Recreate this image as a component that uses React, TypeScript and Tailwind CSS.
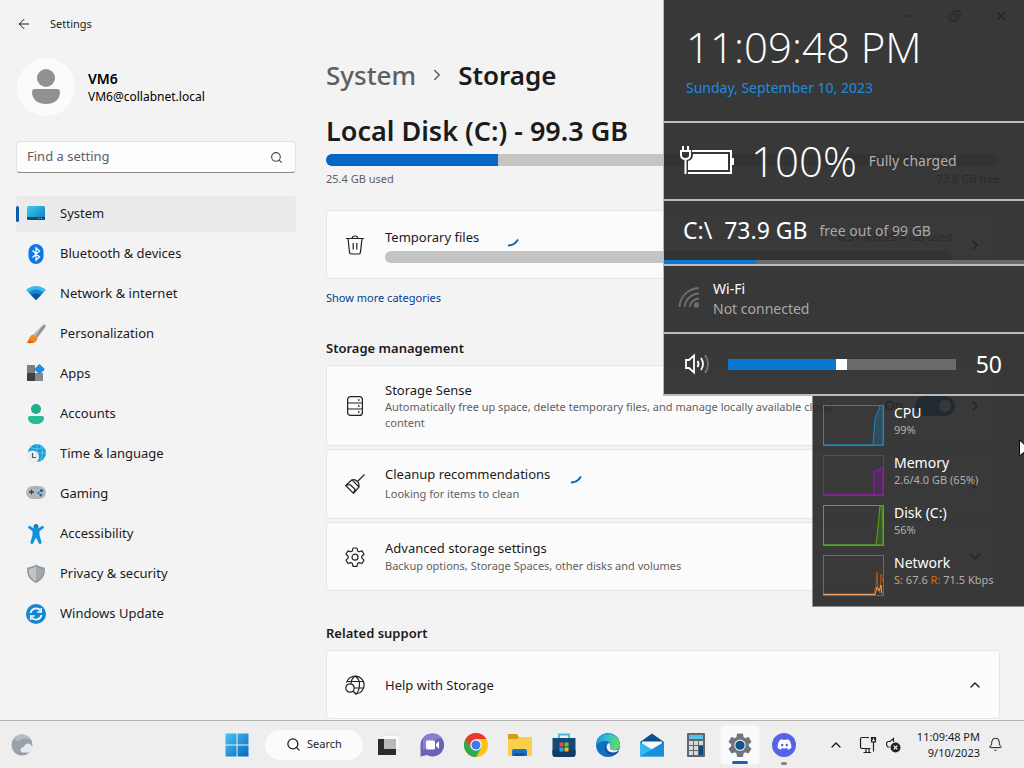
import type { ReactNode } from 'react'
import { ArrowLeft, Bell, ChevronDown, ChevronRight, ChevronUp, Copy, Minus, Search, X } from 'lucide-react'
import { FaDiscord } from 'react-icons/fa'

const GEAR =
  'M8 1h4l.6 2.900 1.600.9 2.800-.9 2 3.400-2.200 2v1.800l2.200 2-2 3.400-2.800-.9-1.600.9L12 19.400H8l-.6-2.900-1.600-.9-2.800.9-2-3.400 2.200-2V9.300L1 7.300l2-3.400 2.800.9 1.600-.9z'

/* ---------- sidebar icons ---------- */

function SystemIcon() {
  return (
    <svg width="20" height="20" viewBox="0 0 20 20">
      <defs>
        <linearGradient id="sys" x1="0" y1="0" x2="1" y2="1">
          <stop offset="0" stopColor="#37d0ef" />
          <stop offset="1" stopColor="#1278b8" />
        </linearGradient>
      </defs>
      <rect x="1" y="2" width="18" height="14" rx="1.500" fill="url(#sys)" />
      <path d="M1 13h18v1.500a1.500 1.500 0 0 1-1.500 1.500h-15A1.500 1.500 0 0 1 1 14.500z" fill="#0b4f80" />
      <path d="M12.500 14.500h1M15 14.500h1" stroke="#7fd3f5" />
    </svg>
  )
}

function BluetoothIcon() {
  return (
    <svg width="20" height="20" viewBox="0 0 20 20">
      <rect x="2.500" width="15" height="20" rx="7.500" fill="#0a78e6" />
      <path d="M6.500 6.500l7 6.500L10 16V4l3.500 3-7 6.500" fill="none" stroke="#fff" strokeWidth="1.300" />
    </svg>
  )
}

function NetworkIcon() {
  return (
    <svg width="20" height="20" viewBox="0 0 20 20">
      <path d="M0 6Q10-2 20 6L10 16z" fill="#3bb9ea" />
      <path d="M2.600 8.500Q10 2.500 17.400 8.500L10 16z" fill="#1b84d2" />
      <path d="M5.300 11.200Q10 7.500 14.700 11.200L10 16z" fill="#0d559c" />
    </svg>
  )
}

function BrushIcon() {
  return (
    <svg width="20" height="20" viewBox="0 0 20 20">
      <path d="M18.500.5c1.500 0 1.200 1.500.6 2.700L11.500 13.500 7.500 10.500 16.300 1.700z" fill="#8d9299" />
      <path d="M17 1.500L7.800 10.700l1.700 1.200z" fill="#bdc1c6" />
      <path d="M7.500 10.500l4 3c.3 5-5.500 6.500-11 5.300 2.800-1.500 1.800-7.300 7-8.300z" fill="#f08a24" />
      <path d="M.5 18.800c3.500.8 7 .3 9-1.300-3 .5-5-.5-6-2-.8 1.500-1.300 2.700-3 3.300z" fill="#d9661c" />
    </svg>
  )
}

function AppsIcon() {
  return (
    <svg width="20" height="20" viewBox="0 0 20 20">
      <path d="M1 1h8v8H1z" fill="#7b7f83" />
      <path d="M1 9h8v8H1z" fill="#3d4145" />
      <path d="M9 9h8v8H9z" fill="#85898d" />
      <path d="M13.500 0L19 5.200 13.500 10.500 8 5.200z" fill="#1f8fe0" />
    </svg>
  )
}

function AccountsIcon() {
  return (
    <svg width="20" height="20" viewBox="0 0 20 20">
      <circle cx="10" cy="5" r="5" fill="#20ae8c" />
      <path d="M2 14.200A2 2 0 0 1 4 12h12a2 2 0 0 1 2 2.200C17.700 18 14.500 20 10 20s-7.700-2-8-5.800z" fill="#27bd97" />
    </svg>
  )
}

function TimeIcon() {
  return (
    <svg width="20" height="20" viewBox="0 0 20 20">
      <circle cx="11" cy="9" r="9" fill="#1d9bd8" />
      <path d="M11 0v18M2 9h18M4 3.500q7 3 14 0M14.500.800q4 8 0 16.500" fill="none" stroke="#63d0f2" strokeWidth=".8" />
      <circle cx="6.500" cy="13" r="6.500" fill="#eceef0" />
      <path d="M6.500 9v4.500H10" fill="none" stroke="#4b5563" strokeWidth="1.200" />
    </svg>
  )
}

function GamingIcon() {
  return (
    <svg width="20" height="20" viewBox="0 0 20 20">
      <rect y="2" width="20" height="13" rx="6.500" fill="#b3b8bd" />
      <path d="M5.500 5.500v5M3 8h5" stroke="#3d4449" strokeWidth="1.300" />
      <path d="M8.500 4h.8M11 4h.8" stroke="#5d6368" />
      <circle cx="15.500" cy="6.500" r="1.600" fill="#14649b" />
      <circle cx="12.500" cy="8.800" r="1.400" fill="#3389bd" />
      <circle cx="14.800" cy="11" r="1.500" fill="#1878b5" />
    </svg>
  )
}

function AccessibilityIcon() {
  return (
    <svg width="20" height="20" viewBox="0 0 20 20">
      <circle cx="10" cy="2.500" r="2.500" fill="#137fc9" />
      <path
        d="M2.300 2.500c.6-.9 1.400-.8 2.200-.2C8 5.500 12 5.500 15.500 2.300c.8-.6 1.600-.7 2.200.2.500.9.100 1.500-.6 2.100L13.500 7.300v4l2 6.700c.3 1-.2 1.600-.9 1.900-.9.300-1.600-.1-2-.9L10 13.500 7.400 19c-.4.800-1.100 1.200-2 .9-.7-.3-1.200-.9-.9-1.900l2-6.700v-4L2.900 4.600c-.7-.6-1.100-1.200-.6-2.100z"
        fill="#1590dc"
      />
    </svg>
  )
}

function ShieldIcon() {
  return (
    <svg width="20" height="20" viewBox="0 0 20 20">
      <path d="M10 .5c2.500 1.800 5.500 2.800 8.800 3C19.500 11 16.500 16 10 19 3.500 16 .5 11 1.200 3.500 4.500 3.300 7.500 2.300 10 .5z" fill="#8f9499" />
      <path d="M10 2.300v15C4.800 14.500 2.500 11 2.600 5 5.300 4.700 8 3.800 10 2.300z" fill="#c0c4c7" />
      <path d="M10 2.300v15c5.200-2.800 7.500-6.300 7.400-12.300-2.700-.3-5.400-1.200-7.400-2.700z" fill="#a3a8ac" />
    </svg>
  )
}

function UpdateIcon() {
  return (
    <svg width="20" height="20" viewBox="0 0 20 20">
      <circle cx="10" cy="10" r="10" fill="#1486d4" />
      <path d="M4.500 9A5.700 5.700 0 0 1 14.500 6.500M15.500 11A5.700 5.700 0 0 1 5.500 13.500" fill="none" stroke="#fff" strokeWidth="1.700" />
      <path d="M15.300 4v4h-4M4.700 16v-4h4" fill="none" stroke="#fff" strokeWidth="1.500" />
    </svg>
  )
}

const navItems: { label: string; icon: ReactNode }[] = [
  { label: 'System', icon: <SystemIcon /> },
  { label: 'Bluetooth & devices', icon: <BluetoothIcon /> },
  { label: 'Network & internet', icon: <NetworkIcon /> },
  { label: 'Personalization', icon: <BrushIcon /> },
  { label: 'Apps', icon: <AppsIcon /> },
  { label: 'Accounts', icon: <AccountsIcon /> },
  { label: 'Time & language', icon: <TimeIcon /> },
  { label: 'Gaming', icon: <GamingIcon /> },
  { label: 'Accessibility', icon: <AccessibilityIcon /> },
  { label: 'Privacy & security', icon: <ShieldIcon /> },
  { label: 'Windows Update', icon: <UpdateIcon /> },
]

/* ---------- content icons ---------- */

function TrashIcon() {
  return (
    <svg width="20" height="20" viewBox="0 0 20 20" fill="none" stroke="#222" strokeWidth="1.200">
      <path d="M1 3.500h18M7.200 3.500a2.800 2.500 0 0 1 5.600 0M3 3.500l1.500 13.600A2 2 0 0 0 6.500 19h7a2 2 0 0 0 2-1.900L17 3.500M8.200 8v6.500M11.800 8v6.500" />
    </svg>
  )
}

function DrivesIcon() {
  return (
    <svg width="20" height="20" viewBox="0 0 20 20" fill="none" stroke="#222" strokeWidth="1.200">
      <rect x="2.600" y=".6" width="14.800" height="18.800" rx="3" />
      <path d="M2.600 6.500q0 .5 2 .5h10.800q2 0 2-.5M2.600 12.500q0 .5 2 .5h10.800q2 0 2-.5" />
      <path d="M13 4h1.500M13 10h1.500M13 16h1.500" strokeWidth="1.600" />
    </svg>
  )
}

function BroomIcon() {
  return (
    <svg width="20" height="20" viewBox="0 0 20 20" fill="none" stroke="#222" strokeWidth="1.200" strokeLinejoin="round">
      <path d="M19.500.5l-7 7M7 5.800q3.500-.5 5.500 1.700t1.500 5.500L8.500 19.300.7 11.500zM7 5.800l7 7.200M.7 11.500l4.300-1M8.500 19.300l1.500-4-5-4.800" />
    </svg>
  )
}

function GearIcon() {
  return (
    <svg width="20" height="20" viewBox="0 0 20 20" fill="none" stroke="#222" strokeWidth="1.200" strokeLinejoin="round">
      <path d={GEAR} />
      <circle cx="10" cy="10.200" r="3" />
    </svg>
  )
}

function GlobeSearchIcon() {
  return (
    <svg width="20" height="20" viewBox="0 0 20 20" fill="none" stroke="#222" strokeWidth="1.200">
      <path d="M1.500 7.500A9 9 0 1 1 11.500 19M2 6.500h17M9 13h10M6 8.500Q6.500 3 10.300 1 15 5 14.500 10q0 5-3 9" />
      <circle cx="5" cy="13" r="4.200" />
      <path d="M8 16l3.500 3.500" strokeWidth="1.500" />
    </svg>
  )
}

function Spinner() {
  return (
    <svg width="20" height="20" viewBox="0 0 20 20" fill="none" aria-label="Loading">
      <path d="M7 18.500Q13.500 18.500 17 12.500" stroke="#0f63a5" strokeWidth="1.800" />
    </svg>
  )
}

function Card({ icon, height, children, side }: { icon: ReactNode; height: string; children: ReactNode; side?: ReactNode }) {
  return (
    <div className={`flex items-center rounded-sm border border-[#e5e5e5] bg-[#fbfbfb] pr-4 pl-[18px] ${height}`}>
      <div className="w-10 shrink-0">{icon}</div>
      <div className="min-w-0 flex-1">{children}</div>
      <div className="flex shrink-0 items-center">{side}</div>
    </div>
  )
}

function Sidebar() {
  return (
    <aside className="flex w-[296px] shrink-0 flex-col pl-4">
      <div className="mt-2 flex items-center gap-3">
        <svg className="size-[60px]" viewBox="0 0 60 60">
          <circle cx="30" cy="31" r="29" fill="#fbfbfb" />
          <circle cx="30" cy="22" r="9" fill="#919191" />
          <path d="M16 36q0-3 3-3h22q3 0 3 3c0 8-6 12-14 12s-14-4-14-12z" fill="#919191" />
        </svg>
        <div className="pt-1">
          <div className="text-sm leading-[18px] font-semibold text-black">VM6</div>
          <div className="text-xs leading-[18px] text-black">VM6@collabnet.local</div>
        </div>
      </div>
      <label className="mt-[25px] flex h-8 items-center rounded-sm border border-[#e3e3e3] border-b-[#868686] bg-[#fdfdfd] pr-3 pl-[10px]">
        <input
          type="text"
          placeholder="Find a setting"
          aria-label="Find a setting"
          className="min-w-0 flex-1 bg-transparent text-[13px] outline-none placeholder:text-[#606060]"
        />
        <Search size={13} strokeWidth={2} className="text-[#444]" />
      </label>
      <nav className="mt-[23px] flex flex-col gap-1">
        {navItems.map(({ label, icon }, i) => (
          <a
            key={label}
            href="#"
            className={`relative flex h-9 items-center gap-[14px] rounded-sm pl-[10px] text-[13px] text-[#1b1b1b] ${i === 0 ? 'bg-[#eaeaea]' : ''}`}
          >
            {i === 0 && <span className="absolute left-0 h-4 w-[3px] rounded-full bg-[#0f5ca8]" />}
            {icon}
            {label}
          </a>
        ))}
      </nav>
    </aside>
  )
}

function Content() {
  return (
    <main className="min-w-0 flex-1 overflow-hidden pr-6 pl-[30px] text-[#1b1b1b]">
      <h1 className="mt-[7px] flex h-10 items-center text-[26px] leading-10 font-semibold">
        <a href="#" className="font-medium text-[#5f5f5f]">System</a>
        <ChevronRight size={18} className="mx-3 text-[#5f5f5f]" />
        Storage
      </h1>
      <h2 className="mt-4 text-[27px] leading-10 font-semibold">Local Disk (C:) - 99.3 GB</h2>
      <div className="mt-[3px] flex h-3 overflow-hidden rounded-full bg-[#c4c4c4]">
        <div className="w-[172px] bg-[#0566c8]" />
      </div>
      <div className="mt-1 flex justify-between text-[11px] leading-[18px] text-[#5f5f5f]">
        <span>25.4 GB used</span>
        <span>73.8 GB free</span>
      </div>

      <div className="mt-[22px]">
        <Card icon={<TrashIcon />} height="h-[69px]" side={<ChevronRight size={16} className="ml-[15px]" />}>
          <div className="flex items-center justify-between text-[13px] leading-5">
            <div className="flex items-center gap-[22px]">
              Temporary files
              <Spinner />
            </div>
            <span className="text-[11px] text-[#5f5f5f]">6.31 MB/25.4 GB used</span>
          </div>
          <div className="mt-1 h-3 rounded-full bg-[#c4c4c4]" />
        </Card>
      </div>
      <a href="#" className="mt-[10px] block text-[11px] leading-[18px] text-[#003e92]">Show more categories</a>

      <h3 className="mt-8 text-[13px] leading-[18px] font-semibold">Storage management</h3>
      <div className="mt-2 flex flex-col gap-[3px]">
        <Card
          icon={<DrivesIcon />}
          height="h-[81px]"
          side={
            <>
              <label htmlFor="sense" className="mr-3 text-[13px]">On</label>
              <span className="relative mr-3 flex h-5 w-10">
                <input id="sense" type="checkbox" defaultChecked className="h-5 w-10 appearance-none rounded-full bg-[#0067c0]" />
                <span className="pointer-events-none absolute top-1 right-1 size-3 rounded-full bg-white" />
              </span>
              <ChevronRight size={16} />
            </>
          }
        >
          <div className="text-[13px] leading-[18px]">Storage Sense</div>
          <div className="max-w-[480px] text-[11px] leading-4 text-[#5f5f5f]">
            Automatically free up space, delete temporary files, and manage locally available cloud content
          </div>
        </Card>
        <Card icon={<BroomIcon />} height="h-[70px]" side={<ChevronRight size={16} />}>
          <div className="flex items-center gap-[14px] text-[13px] leading-5">
            Cleanup recommendations
            <Spinner />
          </div>
          <div className="text-[11px] leading-5 text-[#5f5f5f]">Looking for items to clean</div>
        </Card>
        <Card icon={<GearIcon />} height="h-[69px]" side={<ChevronDown size={16} />}>
          <div className="text-[13px] leading-[18px]">Advanced storage settings</div>
          <div className="text-[11px] leading-[18px] text-[#5f5f5f]">Backup options, Storage Spaces, other disks and volumes</div>
        </Card>
      </div>

      <h3 className="mt-[33px] text-[13px] leading-[18px] font-semibold">Related support</h3>
      <div className="mt-2">
        <Card icon={<GlobeSearchIcon />} height="h-[69px]" side={<ChevronUp size={16} />}>
          <div className="text-[13px] leading-5">Help with Storage</div>
        </Card>
        <div className="h-10 border-x border-[#e5e5e5] bg-[#fbfbfb]" />
      </div>
    </main>
  )
}

/* ---------- status overlay ---------- */

const meters = [
  { name: 'CPU', value: '99%', color: '#1c86c0', line: 'M0 40H50L52 14 56 4 57 0 60 1V40z', fill: 'rgba(28,134,192,.25)' },
  { name: 'Memory', value: '2.6/4.0 GB (65%)', color: '#9616b2', line: 'M0 40H51V16L57 15V13H60V40z', fill: 'rgba(140,19,166,.25)' },
  { name: 'Disk (C:)', value: '56%', color: '#55a81a', line: 'M0 40H53L55 22 57 1 59 1 60 26V40z', fill: 'rgba(79,158,23,.25)' },
]

function Overlay() {
  return (
    <div className="absolute top-0 right-0 flex w-[361px] flex-col items-end text-white">
      <section className="flex w-full flex-col border-l border-[#b9b9b9]">
        <div className="h-[121px] bg-[#232323]/90 pt-5 pl-[22px]">
          <div className="font-['Open_Sans',sans-serif] text-[42px] leading-[54px] font-light">11:09:48 PM</div>
          <div className="mt-1 text-sm leading-5 text-[#1b8ce0]">Sunday, September 10, 2023</div>
        </div>
        <div className="h-[2px] bg-[#bbb]" />
        <div className="flex h-[76px] items-center bg-[#232323]/90 pl-4">
          <svg width="55" height="30" viewBox="0 0 55 30">
            <path d="M12 5h39v22H8" fill="none" stroke="#fff" strokeWidth="2" />
            <path d="M13 8h35v16H8V15q5-1 5-7z" fill="#fff" />
            <path d="M52 12h2v7h-2z" fill="#fff" />
            <path d="M3 0v5M8 0v5M1 5h9v4q0 4-4.500 4T1 9zM5.500 13v15" fill="none" stroke="#fff" strokeWidth="2" />
          </svg>
          <div className="ml-4 font-['Open_Sans',sans-serif] text-[42px] leading-[54px] font-light">100%</div>
          <div className="ml-3 text-sm text-[#b0b0b0]">Fully charged</div>
        </div>
        <div className="h-[2px] bg-[#bbb]" />
        <div className="flex h-[59px] items-center bg-[#232323]/90 pl-[19px]">
          <div className="text-[23px] whitespace-pre">C:\  73.9 GB</div>
          <div className="ml-3 text-sm text-[#a9a9a9]">free out of 99 GB</div>
        </div>
        <div className="flex h-1 bg-[#6b6b6b]">
          <div className="w-[92px] bg-[#0878d2]" />
        </div>
        <div className="h-[2px] bg-[#bbb]" />
        <div className="flex h-[66px] items-center bg-[#232323]/90 pl-[14px]">
          <svg width="24" height="24" viewBox="0 0 24 24" fill="none" stroke="#6e6e6e" strokeWidth="1.800">
            <path d="M1.500 20A20 20 0 0 1 21 1M6.500 20A15 15 0 0 1 21 6.500M11.500 20A10 10 0 0 1 21 11.500" />
            <circle cx="18.500" cy="18" r="1.800" fill="#6e6e6e" />
          </svg>
          <div className="ml-[11px] text-sm leading-5">
            <div>Wi-Fi</div>
            <div className="text-[#a9a9a9]">Not connected</div>
          </div>
        </div>
        <div className="h-[2px] bg-[#bbb]" />
        <div className="flex h-[60px] items-center bg-[#232323]/90 pr-[22px] pl-5">
          <svg width="28" height="24" viewBox="0 0 28 24" fill="none" stroke="#fff" strokeWidth="1.800">
            <path d="M2 8h3l5-4.500v17L5 16H2z" />
            <path d="M13.500 9q2 3 0 6M17 6q4 6 0 12" />
            <path d="M21 3q6 9 0 18" stroke="#777" />
          </svg>
          <div className="relative ml-4 flex h-[11px] flex-1 bg-[#6b6b6b]">
            <div className="w-1/2 bg-[#0878d2]" />
            <input
              type="range"
              min={0}
              max={100}
              defaultValue={50}
              aria-label="Volume"
              className="absolute inset-0 h-full w-full appearance-none bg-transparent [&::-webkit-slider-thumb]:h-[11px] [&::-webkit-slider-thumb]:w-[11px] [&::-webkit-slider-thumb]:appearance-none [&::-webkit-slider-thumb]:bg-white"
            />
          </div>
          <div className="ml-5 text-[23px]">50</div>
        </div>
        <div className="h-[2px] bg-[#bbb]" />
      </section>

      <section className="h-[211px] w-[212px] border-b border-l border-[#8f8f8f] bg-[#232323]/90 pt-2 pl-[10px]">
        {meters.map((m) => (
          <div key={m.name} className="flex h-[50px] gap-[10px]">
            <svg className="mt-px shrink-0" width="61" height="41" viewBox="0 0 61 41" fill="none" stroke={m.color}>
              <path d="M.5.5h60v40H.5z" shapeRendering="crispEdges" />
              <path d={m.line} fill={m.fill} />
            </svg>
            <MeterText name={m.name}>{m.value}</MeterText>
          </div>
        ))}
        <div className="flex h-[50px] gap-[10px]">
          <svg className="mt-px shrink-0" width="61" height="41" viewBox="0 0 61 41" fill="none" stroke="#b4570f">
            <path d="M.5.5h60v40H.5z" shapeRendering="crispEdges" />
            <path d="M0 39H51L53 30 54 17 55 36 57 38 58 19 60 28" />
            <path d="M0 39.500H52L54 32 56 36 58 30 59 39" stroke="#eba064" />
          </svg>
          <MeterText name="Network">
            <span className="text-[#d89a62]">S:</span> 67.6 <span className="text-[#d0701c]">R:</span> 71.5 Kbps
          </MeterText>
        </div>
      </section>
    </div>
  )
}

function MeterText({ name, children }: { name: string; children: ReactNode }) {
  return (
    <div className="whitespace-nowrap">
      <div className="text-sm leading-[18px]">{name}</div>
      <div className="text-[11px] leading-4 text-[#b0b0b0]">{children}</div>
    </div>
  )
}

/* ---------- taskbar ---------- */

function TaskButton({ label, active, children }: { label: string; active?: boolean; children: ReactNode }) {
  return (
    <button
      aria-label={label}
      className={`relative flex size-10 items-center justify-center rounded ${active ? 'border border-[#f3f3f3] bg-[#fafafa]' : ''}`}
    >
      {children}
    </button>
  )
}

function Taskbar() {
  return (
    <footer className="grid h-12 shrink-0 grid-cols-[1fr_auto_1fr] items-center border-t border-[#b4b4b4] bg-[#eee] pr-[3px] text-[#1b1b1b]">
      <button aria-label="Weather" className="ml-[11px] size-[22px]">
        <svg width="22" height="22" viewBox="0 0 22 22">
          <circle cx="11" cy="11" r="10.500" fill="#98a1a9" />
          <path d="M3 4a10.500 10.500 0 0 1 17 2Q12 2 7 8z" fill="#b4bbc1" />
          <path d="M12 18.500q-3-.5-2.500-3t3-2.500q1-3 4-3.500t4.500 3q1 3.500-2 6z" fill="#e6e9ec" />
        </svg>
      </button>

      <div className="flex items-center gap-1">
        <TaskButton label="Start">
          <svg width="24" height="24" viewBox="0 0 24 24">
            <defs>
              <linearGradient id="win" x1="0" y1="0" x2="1" y2="1">
                <stop offset="0" stopColor="#4cc2f1" />
                <stop offset="1" stopColor="#0568c4" />
              </linearGradient>
            </defs>
            <path d="M.5.5h11v11H.5zM12.500.5h11v11h-11zM.5 12.500h11v11H.5zM12.500 12.500h11v11h-11z" fill="url(#win)" />
          </svg>
        </TaskButton>
        <button className="mr-px ml-1 flex h-[30px] w-[98px] items-center justify-center gap-[6px] rounded-full bg-[#fbfbfb] text-[11px]">
          <Search size={15} strokeWidth={2} />
          Search
        </button>
        <TaskButton label="Task view">
          <svg width="24" height="24" viewBox="0 0 24 24">
            <path d="M6 2h18v15H6z" fill="#fafafa" stroke="#e2e2e2" />
            <path d="M2 6h18v16H2z" fill="#2b2b2b" />
            <path d="M8 6h12v10H8z" fill="#b9b9b9" />
          </svg>
        </TaskButton>
        <TaskButton label="Chat">
          <svg width="24" height="24" viewBox="0 0 24 24">
            <path d="M12.500.5A11.500 11.500 0 1 1 7 22l-6.500 1.500V12A11.500 11.500 0 0 1 12.500.5z" fill="#6a61b8" />
            <path d="M3 6A11.500 11.500 0 0 1 22 5Q12 6 3 18z" fill="#8a80cf" />
            <rect x="6" y="7.500" width="9" height="9" rx="1.500" fill="#fff" />
            <path d="M16 11l3-3v8l-3-3z" fill="#fff" />
          </svg>
        </TaskButton>
        <TaskButton label="Chrome">
          <svg width="24" height="24" viewBox="0 0 24 24">
            <circle cx="12" cy="12" r="12" fill="#fbc116" />
            <path d="M1.600 6A12 12 0 0 0 12 24l5.200-9L12 12 6.800 15z" fill="#2da94f" />
            <path d="M1.600 6A12 12 0 0 1 22.400 6H12L6.800 15z" fill="#e33b2e" />
            <circle cx="12" cy="12" r="5.700" fill="#fff" />
            <circle cx="12" cy="12" r="4.500" fill="#3a7ce8" />
          </svg>
        </TaskButton>
        <TaskButton label="File Explorer">
          <svg width="24" height="24" viewBox="0 0 24 24">
            <path d="M0 2q0-1 1-1h8l2 3v6H0z" fill="#d49a1c" />
            <path d="M0 6h9l2-2h12q1 0 1 1v17q0 1-1 1H1q-1 0-1-1z" fill="#fbcf4b" />
            <path d="M4 23v-5q0-2 2-2h11q2 0 2 2v5z" fill="#1a73c0" />
            <path d="M6 20h11v3H6z" fill="#0f569a" />
          </svg>
        </TaskButton>
        <TaskButton label="Microsoft Store">
          <svg width="24" height="24" viewBox="0 0 24 24">
            <path d="M7 6V1.500h10V6" fill="none" stroke="#45b8e8" strokeWidth="1.800" />
            <path d="M.5 5h23v16q0 3-3 3h-17q-3 0-3-3z" fill="#134a78" />
            <path d="M.5 17h23v4q0 3-3 3h-17q-3 0-3-3z" fill="#103c66" />
            <path d="M7.500 9.500h4v4h-4z" fill="#e9532b" />
            <path d="M12.500 9.500h4v4h-4z" fill="#7fba27" />
            <path d="M7.500 14.500h4v4h-4z" fill="#25a5ea" />
            <path d="M12.500 14.500h4v4h-4z" fill="#fbb917" />
          </svg>
        </TaskButton>
        <TaskButton label="Edge">
          <svg width="24" height="24" viewBox="0 0 24 24">
            <defs>
              <linearGradient id="edge" x1="0" y1="0" x2="1" y2=".3">
                <stop offset="0" stopColor="#1e95dc" />
                <stop offset=".5" stopColor="#2fc0d0" />
                <stop offset="1" stopColor="#5fdc62" />
              </linearGradient>
            </defs>
            <circle cx="12" cy="12" r="12" fill="#0f6fc3" />
            <path d="M.3 10A12 12 0 0 1 24 11.500c0 4-3 5.500-6.500 5.500-3 0-4-1.300-3.200-2.700C16 11.500 13.500 8 9.500 8 5 8 1 9.500.3 14z" fill="url(#edge)" />
            <path d="M9.500 11.500c-2.500 4.500.5 10.500 7 10.500 2 0 4-.8 5.500-2.500 1-1.500.5-2-1-1.300C15 20 10.500 17 11.500 12z" fill="#164f9c" />
            <path d="M14.300 14.300q.8-2-.8-4.300-2.800.8-3 4 .5 5 6 5.500 4 .2 7-3-4 1.200-7 .6t-2.200-2.800z" fill="#eee" />
          </svg>
        </TaskButton>
        <TaskButton label="Mail">
          <svg width="24" height="24" viewBox="0 0 24 24">
            <path d="M0 9L12 .5 24 9v4H0z" fill="#0f4f8f" />
            <path d="M2 8.500h20v8H2z" fill="#f7f9fb" />
            <path d="M0 9l12 7.500L24 9v14.500H0z" fill="#36b8f0" />
            <path d="M0 23.500L24 9v14.500z" fill="#1c8ed8" />
          </svg>
        </TaskButton>
        <TaskButton label="Calculator">
          <svg width="24" height="24" viewBox="0 0 24 24">
            <rect x="3" width="18" height="24" rx="1" fill="#5e666e" />
            <path d="M5 2h14v4H5z" fill="#52c3e8" />
            <path d="M5 8h4v4H5zM10 8h4v4h-4zM15 8h4v4h-4zM5 13h4v4H5zM10 13h4v4h-4zM5 18h4v4H5zM10 18h4v4h-4z" fill="#d6dade" />
            <path d="M15 13h4v9h-4z" fill="#0f4a80" />
          </svg>
        </TaskButton>
        <TaskButton label="Settings" active>
          <svg width="24" height="24" viewBox="0 0 20 20">
            <path d={GEAR} fill="#6f757b" stroke="#6f757b" strokeLinejoin="round" />
            <circle cx="10" cy="10.200" r="4.700" fill="#e9edf0" />
            <circle cx="10" cy="10.200" r="3.800" fill="#14508c" />
          </svg>
          <span className="absolute bottom-0 h-[3px] w-4 rounded-full bg-[#1067b5]" />
        </TaskButton>
        <TaskButton label="Discord">
          <span className="flex size-6 items-center justify-center rounded-full bg-[#5562ea]">
            <FaDiscord size={15} color="#fff" />
          </span>
          <span className="absolute bottom-0 h-[3px] w-[6px] rounded-full bg-[#838383]" />
        </TaskButton>
      </div>

      <div className="flex items-center justify-end pr-[18px]">
        <button aria-label="Show hidden icons">
          <ChevronUp size={16} />
        </button>
        <button aria-label="Network" className="ml-[15px]">
          <svg width="18" height="18" viewBox="0 0 18 18" fill="none" stroke="#222" strokeWidth="1.200">
            <path d="M10 1.500H3a1.500 1.500 0 0 0-1.500 1.500v8A1.500 1.500 0 0 0 3 12.500h8.500M4.500 16.500h7.500M7 12.500v4M10 12.500v4" />
            <path d="M12.500 1.500h4v4.300h-4zM14.500 6v9.500M13.500 2v2M15.500 2v2" />
          </svg>
        </button>
        <button aria-label="Volume" className="ml-2">
          <svg width="16" height="16" viewBox="0 0 16 16" fill="none" stroke="#222" strokeWidth="1.200">
            <path d="M8.500 5V1.500L5 4.500H3Q1.500 5 1.500 7t1.500 3h1.500" />
            <circle cx="10.500" cy="10.500" r="5" fill="#222" stroke="none" />
            <path d="M8.700 8.700l3.600 3.600M12.300 8.700l-3.600 3.600" stroke="#fff" />
          </svg>
        </button>
        <div className="ml-4 text-right text-[11px] leading-4 whitespace-nowrap">
          <div>11:09:48 PM</div>
          <div>9/10/2023</div>
        </div>
        <button aria-label="Notifications" className="ml-2">
          <Bell size={15} strokeWidth={1.600} />
        </button>
      </div>
    </footer>
  )
}

export default function App() {
  return (
    <div className="relative flex h-screen flex-col overflow-hidden bg-[#f3f3f3] font-['Noto_Sans','Open_Sans',sans-serif]">
      <header className="flex h-12 shrink-0 items-center justify-between pr-4 pl-4 text-[#1b1b1b]">
        <div className="flex items-center gap-[18px]">
          <button aria-label="Back">
            <ArrowLeft size={16} strokeWidth={1.500} />
          </button>
          <span className="text-[11px]">Settings</span>
        </div>
        <div className="flex items-center gap-[33px] pb-4">
          <button aria-label="Minimize"><Minus size={12} /></button>
          <button aria-label="Restore"><Copy size={12} className="rotate-90" /></button>
          <button aria-label="Close"><X size={14} /></button>
        </div>
      </header>
      <div className="flex min-h-0 flex-1">
        <Sidebar />
        <Content />
      </div>
      <Taskbar />
      <Overlay />
      {/* pointer resting half off the right edge */}
      <svg className="absolute top-[439px] right-0" width="6" height="20" viewBox="0 0 6 20">
        <path d="M1.500 1v16l4-3.500 2 5 3-1-2-5h5z" fill="#fff" stroke="#000" />
      </svg>
    </div>
  )
}
